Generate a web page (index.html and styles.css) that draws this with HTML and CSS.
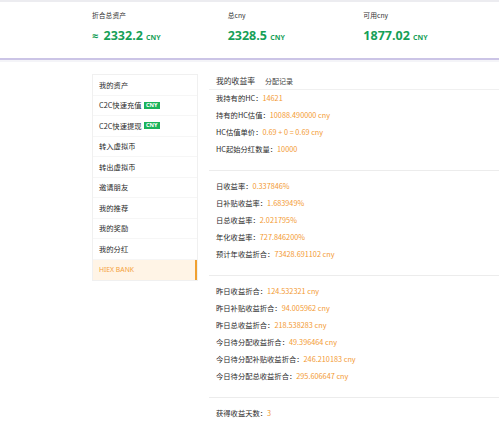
FILE: index.html
```html
<!DOCTYPE html>
<html lang="zh-CN">
<head>
<meta charset="utf-8">
<title>HIEX BANK</title>
<link rel="stylesheet" href="styles.css">
</head>
<body>
<header class="top">
  <div class="stats">
    <div class="stat">
      <div class="stat-label">折合总资产</div>
      <div class="stat-value"><span class="approx">≈</span> 2332.2 <span class="unit">CNY</span></div>
    </div>
    <div class="stat">
      <div class="stat-label">总cny</div>
      <div class="stat-value">2328.5 <span class="unit">CNY</span></div>
    </div>
    <div class="stat">
      <div class="stat-label">可用cny</div>
      <div class="stat-value">1877.02 <span class="unit">CNY</span></div>
    </div>
  </div>
</header>
<div class="main">
  <nav class="side">
    <div class="item">我的资产</div>
    <div class="item">C2C快速充值 <span class="badge">CNY</span></div>
    <div class="item">C2C快速提现 <span class="badge">CNY</span></div>
    <div class="item">转入虚拟币</div>
    <div class="item">转出虚拟币</div>
    <div class="item">邀请朋友</div>
    <div class="item">我的推荐</div>
    <div class="item">我的奖励</div>
    <div class="item">我的分红</div>
    <div class="item active">HIEX BANK</div>
  </nav>
  <section class="content">
    <div class="tabs">
      <span class="tab tab-main">我的收益率</span>
      <span class="tab">分配记录</span>
    </div>
    <div class="group">
      <div class="row">我持有的HC：<span class="v">14621</span></div>
      <div class="row">持有的HC估值：<span class="v">10088.490000 cny</span></div>
      <div class="row">HC估值单价：<span class="v">0.69 + 0 = 0.69 cny</span></div>
      <div class="row">HC起始分红数量：<span class="v">10000</span></div>
    </div>
    <div class="group">
      <div class="row">日收益率：<span class="v">0.337846%</span></div>
      <div class="row">日补贴收益率：<span class="v">1.683949%</span></div>
      <div class="row">日总收益率：<span class="v">2.021795%</span></div>
      <div class="row">年化收益率：<span class="v">727.846200%</span></div>
      <div class="row">预计年收益折合：<span class="v">73428.691102 cny</span></div>
    </div>
    <div class="group">
      <div class="row">昨日收益折合：<span class="v">124.532321 cny</span></div>
      <div class="row">昨日补贴收益折合：<span class="v">94.005962 cny</span></div>
      <div class="row">昨日总收益折合：<span class="v">218.538283 cny</span></div>
      <div class="row">今日待分配收益折合：<span class="v">49.396464 cny</span></div>
      <div class="row">今日待分配补贴收益折合：<span class="v">246.210183 cny</span></div>
      <div class="row">今日待分配总收益折合：<span class="v">295.606647 cny</span></div>
    </div>
    <div class="group last">
      <div class="row">获得收益天数：<span class="v">3</span></div>
    </div>
  </section>
</div>
</body>
</html>
```
FILE: styles.css
```css
html, body {
  margin: 0;
  padding: 0;
  background: #fff;
}
body {
  font-family: "Noto Sans CJK SC", "Noto Sans", sans-serif;
  color: #333;
  height: 421px;
  overflow: hidden;
}
body::after {
  content: "";
  position: fixed;
  left: 0;
  right: 0;
  bottom: 0;
  height: 14px;
  z-index: -1;
  background: linear-gradient(#ffffff, #eeeeee);
}
.top {
  border-top: 2px solid #ececf0;
  border-bottom: 2px solid #cbc4e6;
  height: 56px;
  box-shadow: 0 2px 0 #f4f4f8;
  background: #fff;
}
.stats {
  display: flex;
  padding-left: 92px;
}
.stat {
  width: 145.5px;
}
.stat-label {
  font-size: 6.8px;
  line-height: 10px;
  margin-top: 8px;
  color: #333;
}
.stat-value {
  margin-top: 7px;
  font-size: 12.5px;
  line-height: 18px;
  font-weight: 700;
  color: #16a057;
  font-family: "Open Sans", "Noto Sans", sans-serif;
}
.approx {
  font-size: 11px;
  margin-right: 2px;
}
.unit {
  font-size: 7px;
  font-weight: 700;
}
.main {
  display: flex;
  padding-left: 92px;
  padding-top: 14px;
}
.side {
  width: 104px;
  border: 1px solid #f0f0f0;
  align-self: flex-start;
  background: #fff;
}
.item {
  height: 20.5px;
  line-height: 20.5px;
  font-size: 7.3px;
  padding-left: 6px;
  border-bottom: 1px solid #f6f6f6;
  box-sizing: border-box;
  color: #2a2a2a;
  display: flex;
  align-items: center;
  gap: 2px;
}
.item:last-child {
  border-bottom: none;
}
.badge {
  display: inline-block;
  background: #1bb35b;
  color: #fff;
  font-size: 5.5px;
  font-weight: 700;
  line-height: 7px;
  height: 7px;
  padding: 0 2.5px;
  font-family: "Noto Sans", sans-serif;
}
.item.active {
  background: #fff4e6;
  color: #f4a03a;
  border-right: 2px solid #f0a030;
  font-family: "Noto Sans", sans-serif;
  font-size: 6.8px;
}
.content {
  flex: 1;
  margin-left: 11px;
  margin-top: -2px;
}
.tabs {
  height: 17px;
  line-height: 17px;
  padding-left: 7px;
  border-bottom: 1px solid #f0f0f0;
  display: flex;
  gap: 10px;
  align-items: baseline;
}
.tab {
  font-size: 7px;
  color: #444;
}
.tab-main {
  font-size: 7.8px;
  color: #333;
}
.group {
  padding: 7.5px 0 11.5px 7px;
  border-bottom: 1px solid #ececec;
}
.tabs + .group {
  padding-top: 0;
}
.group.last {
  border-bottom: none;
}
.row {
  height: 17px;
  line-height: 17px;
  font-size: 7.3px;
  color: #2a2a2a;
  white-space: nowrap;
}
.v {
  color: #f39a33;
}
```
